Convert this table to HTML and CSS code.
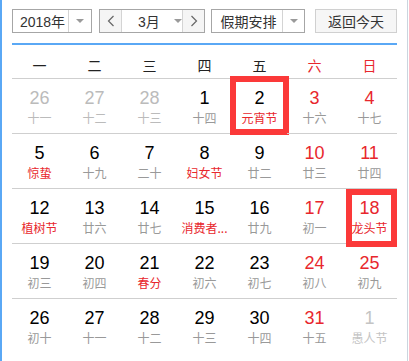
FILE: index.html
```html
<!DOCTYPE html>
<html lang="zh">
<head>
<meta charset="utf-8">
<link rel="stylesheet" href="styles.css">
</head>
<body>
<div class="cal">
  <div class="toolbar">
    <div class="sel sel-year">
      <span class="sel-text">2018年</span>
      <span class="sel-arrow"><i class="tri"></i></span>
    </div>
    <div class="sel sel-month">
      <span class="nav"><svg width="8" height="12" viewBox="0 0 8 12"><polyline points="6.5,1 1.5,6 6.5,11" fill="none" stroke="#666" stroke-width="1.2"/></svg></span>
      <span class="sel-text month-text">3月<i class="tri"></i></span>
      <span class="nav nav-r"><svg width="8" height="12" viewBox="0 0 8 12"><polyline points="1.5,1 6.5,6 1.5,11" fill="none" stroke="#666" stroke-width="1.2"/></svg></span>
    </div>
    <div class="sel sel-holiday">
      <span class="sel-text">假期安排</span>
      <span class="sel-arrow"><i class="tri"></i></span>
    </div>
    <div class="btn-today">返回今天</div>
  </div>

  <div class="grid">
    <div class="wk">一</div><div class="wk">二</div><div class="wk">三</div><div class="wk">四</div><div class="wk">五</div><div class="wk red">六</div><div class="wk red">日</div>

    <div class="day other"><b>26</b><span>十一</span></div>
    <div class="day other"><b>27</b><span>十二</span></div>
    <div class="day other"><b>28</b><span>十三</span></div>
    <div class="day"><b>1</b><span>十四</span></div>
    <div class="day mark mark-a"><b>2</b><span class="hol">元宵节</span></div>
    <div class="day we"><b>3</b><span>十六</span></div>
    <div class="day we"><b>4</b><span>十七</span></div>

    <div class="day"><b>5</b><span class="hol">惊蛰</span></div>
    <div class="day"><b>6</b><span>十九</span></div>
    <div class="day"><b>7</b><span>二十</span></div>
    <div class="day"><b>8</b><span class="hol">妇女节</span></div>
    <div class="day"><b>9</b><span>廿二</span></div>
    <div class="day we"><b>10</b><span>廿三</span></div>
    <div class="day we"><b>11</b><span>廿四</span></div>

    <div class="day"><b>12</b><span class="hol">植树节</span></div>
    <div class="day"><b>13</b><span>廿六</span></div>
    <div class="day"><b>14</b><span>廿七</span></div>
    <div class="day"><b>15</b><span class="hol">消费者...</span></div>
    <div class="day"><b>16</b><span>廿九</span></div>
    <div class="day we"><b>17</b><span>初一</span></div>
    <div class="day we mark mark-b"><b>18</b><span class="hol">龙头节</span></div>

    <div class="day"><b>19</b><span>初三</span></div>
    <div class="day"><b>20</b><span>初四</span></div>
    <div class="day"><b>21</b><span class="hol">春分</span></div>
    <div class="day"><b>22</b><span>初六</span></div>
    <div class="day"><b>23</b><span>初七</span></div>
    <div class="day we"><b>24</b><span>初八</span></div>
    <div class="day we"><b>25</b><span>初九</span></div>

    <div class="day last"><b>26</b><span>初十</span></div>
    <div class="day last"><b>27</b><span>十一</span></div>
    <div class="day last"><b>28</b><span>十二</span></div>
    <div class="day last"><b>29</b><span>十三</span></div>
    <div class="day last"><b>30</b><span>十四</span></div>
    <div class="day last we"><b>31</b><span>十五</span></div>
    <div class="day last next"><b>1</b><span>愚人节</span></div>
  </div>
</div>
</body>
</html>
```

FILE: styles.css
```css
* { box-sizing: border-box; }
html, body { margin: 0; padding: 0; background: #fff; }
body {
  width: 409px;
  height: 361px;
  overflow: hidden;
  font-family: Arial, "Liberation Sans", "Noto Sans CJK SC", sans-serif;
}
.cal {
  width: 408px;
  height: 361px;
  border-left: 2px solid #5aa8f5;
  border-right: 1px solid #cbd5df;
  padding: 9px 0 0 10px;
}
.toolbar {
  display: flex;
  align-items: stretch;
  height: 24px;
  width: 385px;
  font-size: 14px;
  color: #333;
}
.sel {
  display: flex;
  border: 1px solid #a6a6a6;
  background: #fff;
}
.sel-text {
  display: flex;
  align-items: center;
  justify-content: center;
}
.sel-arrow {
  display: flex;
  align-items: center;
  justify-content: center;
  border-left: 1px solid #d4d4d4;
}
.tri {
  display: inline-block;
  width: 0;
  height: 0;
  border-top: 4px solid #9a9a9a;
  border-left: 4px solid transparent;
  border-right: 4px solid transparent;
}
.sel-year { width: 80px; }
.sel-year .sel-text { width: 55px; padding-left: 4px; }
.sel-year .sel-arrow { flex: 1; }
.sel-month { width: 106px; margin-left: 7px; }
.nav {
  width: 22px;
  display: flex;
  align-items: center;
  justify-content: center;
  background: #f5f5f5;
  border-right: 1px solid #d4d4d4;
}
.nav-r { border-right: 0; border-left: 1px solid #d4d4d4; flex: 1; }
.month-text {
  width: 60px;
  justify-content: flex-start;
  padding-left: 16px;
}
.month-text .tri { margin-left: 14px; }
.sel-holiday { width: 94px; margin-left: 6px; }
.sel-holiday .sel-text { width: 70px; padding-left: 3px; }
.sel-holiday .sel-arrow { flex: 1; }
.btn-today {
  width: 82px;
  margin-left: 10px;
  border: 1px solid #d0d0d0;
  background: #f6f6f6;
  display: flex;
  align-items: center;
  justify-content: center;
}

.grid {
  margin-top: 10px;
  width: 385px;
  border-top: 2px solid #5aa8f5;
  display: grid;
  grid-template-columns: repeat(7, 55px);
}
.wk {
  height: 34px;
  border-bottom: 1px solid #cfcfcf;
  display: flex;
  align-items: center;
  justify-content: center;
  padding-top: 6px;
  font-size: 14px;
  font-family: "Noto Sans CJK SC", sans-serif;
  color: #222;
}
.wk.red { color: #e8272d; }
.day {
  height: 55px;
  border-bottom: 1px solid #cfcfcf;
  display: flex;
  flex-direction: column;
  align-items: center;
  padding-top: 9px;
  position: relative;
}
.day.last { border-bottom: 0; }
.day b {
  font-weight: normal;
  font-size: 18px;
  line-height: 20px;
  color: #000;
  font-family: Arial, "Liberation Sans", sans-serif;
}
.day span {
  font-size: 12px;
  line-height: 16px;
  margin-top: 2px;
  color: #999;
  font-family: "Noto Sans CJK SC", sans-serif;
}
.day.we b { color: #e8272d; }
.day span.hol { color: #e8272d; }
.day.other b { color: #bbb; }
.day.other span { color: #bbb; }
.day.next b { color: #c4c4c4; }
.day.next span { color: #c4c4c4; }
.mark::after {
  content: "";
  position: absolute;
  border: 6px solid #fb3939;
}
.mark-a::after { left: -2px; right: -2px; top: -3px; bottom: -2px; }
.mark-b::after { left: 4px; right: 0; top: 0; bottom: -4px; }
```
